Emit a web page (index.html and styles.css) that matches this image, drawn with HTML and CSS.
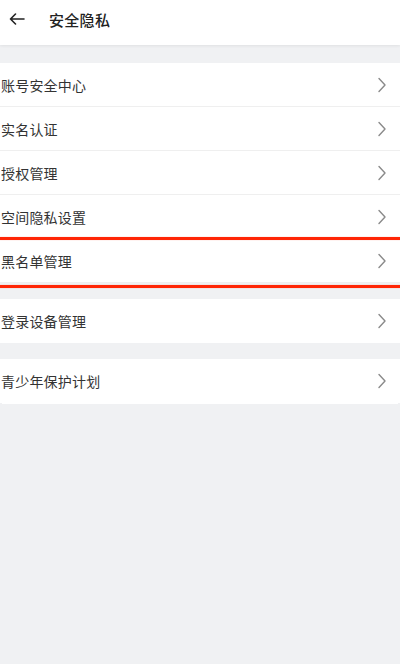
FILE: index.html
```html
<!DOCTYPE html>
<html lang="zh-CN">
<head>
<meta charset="utf-8">
<title>安全隐私</title>
<link rel="stylesheet" href="styles.css">
</head>
<body>
<div class="page">
  <header class="topbar">
    <svg class="back" width="16" height="12" viewBox="0 0 16 12" aria-hidden="true">
      <path d="M15 6H1.5M6.5 1L1.5 6l5 5" fill="none" stroke="#222" stroke-width="1.6" stroke-linecap="round" stroke-linejoin="round"/>
    </svg>
    <h1 class="title">安全隐私</h1>
  </header>

  <section class="group group-first">
    <div class="row"><span class="label">账号安全中心</span><svg class="chev" width="10" height="16" viewBox="0 0 10 16"><path d="M2 1.5l6 6.5-6 6.5" fill="none" stroke="#8a8a8a" stroke-width="1.4" stroke-linecap="round" stroke-linejoin="round"/></svg></div>
    <div class="row"><span class="label">实名认证</span><svg class="chev" width="10" height="16" viewBox="0 0 10 16"><path d="M2 1.5l6 6.5-6 6.5" fill="none" stroke="#8a8a8a" stroke-width="1.4" stroke-linecap="round" stroke-linejoin="round"/></svg></div>
    <div class="row"><span class="label">授权管理</span><svg class="chev" width="10" height="16" viewBox="0 0 10 16"><path d="M2 1.5l6 6.5-6 6.5" fill="none" stroke="#8a8a8a" stroke-width="1.4" stroke-linecap="round" stroke-linejoin="round"/></svg></div>
    <div class="row"><span class="label">空间隐私设置</span><svg class="chev" width="10" height="16" viewBox="0 0 10 16"><path d="M2 1.5l6 6.5-6 6.5" fill="none" stroke="#8a8a8a" stroke-width="1.4" stroke-linecap="round" stroke-linejoin="round"/></svg></div>
    <div class="row"><span class="label">黑名单管理</span><svg class="chev" width="10" height="16" viewBox="0 0 10 16"><path d="M2 1.5l6 6.5-6 6.5" fill="none" stroke="#8a8a8a" stroke-width="1.4" stroke-linecap="round" stroke-linejoin="round"/></svg></div>
    <div class="mark mark-top"></div>
    <div class="mark mark-bottom"></div>
  </section>

  <section class="group">
    <div class="row"><span class="label">登录设备管理</span><svg class="chev" width="10" height="16" viewBox="0 0 10 16"><path d="M2 1.5l6 6.5-6 6.5" fill="none" stroke="#8a8a8a" stroke-width="1.4" stroke-linecap="round" stroke-linejoin="round"/></svg></div>
  </section>

  <section class="group">
    <div class="row"><span class="label">青少年保护计划</span><svg class="chev" width="10" height="16" viewBox="0 0 10 16"><path d="M2 1.5l6 6.5-6 6.5" fill="none" stroke="#8a8a8a" stroke-width="1.4" stroke-linecap="round" stroke-linejoin="round"/></svg></div>
  </section>

  <div class="filler"></div>
</div>
</body>
</html>
```

FILE: styles.css
```css
html, body {
  margin: 0;
  padding: 0;
  background: #ffffff;
}

body {
  font-family: "Noto Sans CJK SC", "Noto Sans", sans-serif;
  color: #333333;
}

.page {
  width: 400px;
  height: 664px;
  display: flex;
  flex-direction: column;
  background: #f0f1f3;
  overflow: hidden;
}

.topbar {
  height: 45px;
  flex: 0 0 45px;
  background: #ffffff;
  display: flex;
  align-items: center;
  padding-left: 9px;
  box-shadow: 0 1px 3px rgba(0, 0, 0, 0.07);
  position: relative;
  z-index: 1;
}

.back {
  display: block;
  margin-top: -7px;
}

.title {
  margin: -7px 0 0 24px;
  font-size: 15px;
  font-weight: 500;
  color: #222222;
  letter-spacing: 0.3px;
}

.group {
  background: #ffffff;
  margin-top: 16px;
  position: relative;
}

.group-first {
  margin-top: 18px;
}

.row {
  height: 44px;
  box-sizing: border-box;
  display: flex;
  align-items: center;
  justify-content: space-between;
  padding: 0 13px 0 1px;
  border-bottom: 1px solid #efefef;
}

.row:last-of-type {
  border-bottom: none;
}

.label {
  font-size: 14px;
  color: #333333;
  letter-spacing: 0.2px;
}

.chev {
  display: block;
}

.mark {
  position: absolute;
  left: 0;
  right: 0;
  height: 3px;
  background: #ff2606;
  box-shadow: 0 0 1px rgba(255, 60, 20, 0.6);
}

.mark-top {
  top: 174px;
}

.mark-bottom {
  top: 222px;
}

.filler {
  flex: 1;
  margin: 0 2px 2px;
  background: #f0f1f3;
  border-top: 1px solid #ffffff;
}
```
